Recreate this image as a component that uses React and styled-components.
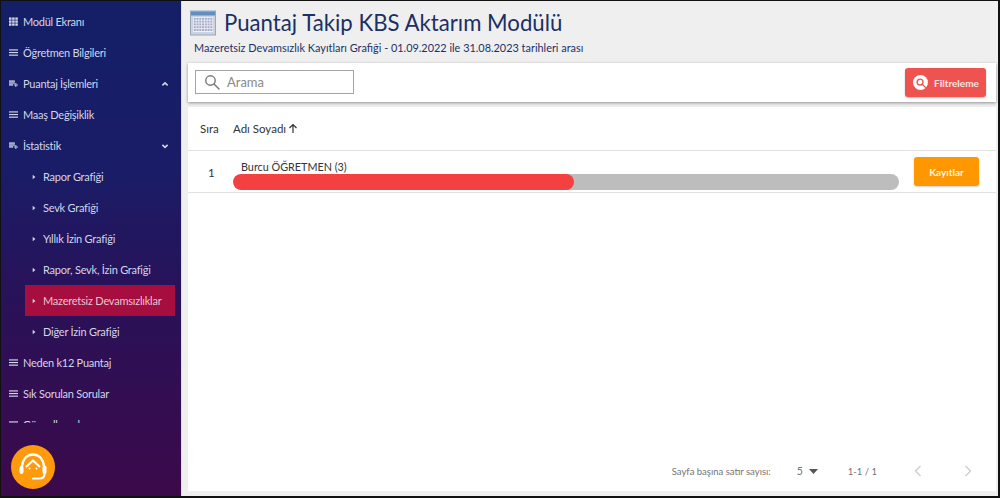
import React from "react";
import styled, { createGlobalStyle } from "styled-components";

const Global = createGlobalStyle`
  html, body { margin: 0; padding: 0; height: 100%; overflow: hidden; background: #000; }
  #root { height: 100%; }
  * { box-sizing: border-box; }
`;
const Frame = styled.div`
  width: 1000px; height: 498px; display: flex; position: relative;
  border: solid #111; border-width: 1px 2px 2px 1px;
  font-family: "Lato", "Open Sans", sans-serif; overflow: hidden;
`;
const Sidebar = styled.aside`
  width: 180px; flex: none; position: relative; display: flex; flex-direction: column;
  background: linear-gradient(180deg, #131f66 0%, #1a1c66 35%, #2a1158 62%, #3c0a4a 100%);
`;
const Menu = styled.nav`
  height: 422px; overflow: hidden; display: flex; flex-direction: column; padding-top: 5px;
`;
const MenuItem = styled.div`
  height: 31px; flex: none; display: flex; align-items: center; padding: 0 9px 0 8px;
  color: #d2d5e8; font-size: 11px; letter-spacing: -0.25px; white-space: nowrap;
  svg { flex: none; margin-right: 5px; }
  span { flex: 1; }
`;
const SubItem = styled.div`
  height: 31px; flex: none; width: 150px; margin-left: 24px; display: flex; align-items: center; padding-left: 7px;
  color: ${p => (p.$active ? "#e6c4d2" : "#d2d5e8")};
  background: ${p => (p.$active ? "#a50e3e" : "transparent")};
  font-size: 11px; letter-spacing: -0.23px; white-space: nowrap;
  svg { flex: none; margin-right: 7px; }
`;
const Fab = styled.div`
  position: absolute; left: 10px; top: 444px; width: 44px; height: 44px; border-radius: 50%;
  background: #ff9a0d; display: flex; align-items: center; justify-content: center;
`;
const Main = styled.main`
  flex: 1; min-width: 0; background: #efefef; display: flex; flex-direction: column;
  padding-left: 6px; padding-right: 2px; border-left: 1px solid #dcdce6;
`;
const Header = styled.header`
  height: 62px; flex: none; margin-left: -6px; padding: 7px 0 0 8px;
`;
const TitleRow = styled.div`
  display: flex; align-items: center; gap: 8px; height: 30px;
`;
const Title = styled.h1`
  margin: 0; font-weight: 400; font-size: 22.2px; line-height: 30px; color: #1c2f66; white-space: nowrap;
`;
const Subtitle = styled.div`
  margin-top: 2px; padding-left: 4px; font-size: 10.9px; line-height: 16px; color: #1c2f66; white-space: nowrap;
`;
const Toolbar = styled.div`
  height: 39px; flex: none; background: #fff; display: flex; align-items: center; justify-content: space-between;
  padding: 0 10px 0 7px; box-shadow: 0 1px 3px rgba(0,0,0,.4);
`;
const Search = styled.div`
  width: 159px; height: 24px; margin-bottom: 2px; border: 1px solid #a4a4a4; display: flex; align-items: center; padding-left: 8px; gap: 7px;
  color: #8a8a8a; font-size: 13px;
`;
const FilterButton = styled.div`
  width: 81px; height: 29px; border-radius: 3px; background: #ef5350; color: #fbe4e4; display: flex; align-items: center;
  padding-left: 8px; gap: 6px; font-size: 10px; font-weight: 700; box-shadow: 0 1px 2px rgba(0,0,0,.25);
`;
const FilterIcon = styled.span`
  width: 15px; height: 15px; border-radius: 50%; background: #fff; display: flex; align-items: center; justify-content: center;
`;
const Card = styled.section`
  flex: 1; min-height: 0; margin-top: 5px; background: #fff; display: flex; flex-direction: column; margin-bottom: 5px;
`;
const HeadRow = styled.div`
  height: 44px; flex: none; display: flex; align-items: center; border-bottom: 1px solid #e2e2e2;
  font-size: 11.5px; color: #333; padding-left: 12px;
`;
const HeadSira = styled.span` width: 33px; `;
const HeadName = styled.span` display: flex; align-items: center; gap: 2px; `;
const Row = styled.div`
  height: 42px; flex: none; display: flex; align-items: center; border-bottom: 1px solid #e2e2e2; padding-left: 20px; padding-right: 17px;
`;
const Index = styled.span` width: 25px; font-size: 11.5px; color: #333; padding-top: 2px; `;
const NameCell = styled.div`
  width: 666px; flex: none; display: flex; flex-direction: column; padding-top: 7px;
`;
const Name = styled.div`
  font-size: 10.8px; line-height: 14px; padding-left: 8px; color: #333; white-space: nowrap;
`;
const Track = styled.div`
  height: 16px; border-radius: 8px; background: #bdbdbd; overflow: hidden;
`;
const Fill = styled.div`
  height: 100%; border-radius: 8px; background: #f34040;
`;
const RecordsButton = styled.div`
  margin-left: auto; width: 65px; height: 29px; border-radius: 3px; background: #ff9800; color: #fff3dc; display: flex; align-items: center; justify-content: center;
  font-size: 10px; font-weight: 700; box-shadow: 0 1px 2px rgba(0,0,0,.2);
`;
const Pagination = styled.footer`
  margin-top: auto; height: 40px; flex: none; display: flex; align-items: center; font-size: 9.5px; color: #757575; padding-right: 24px; justify-content: flex-end;
`;
const PageSize = styled.span`
  display: flex; align-items: center; gap: 6px; margin-left: 26px; margin-right: 30px; font-size: 10.5px;
`;
const PageNav = styled.span`
  display: flex; align-items: center; gap: 42px; margin-left: 37px;
`;

const Grid = () => (
  <svg width="9" height="9" viewBox="0 0 10 10" fill="#d2d5e8">
    {[0, 3.5, 7].flatMap(x => [0.5, 3.8, 7.1].map(y => <rect key={`${x}-${y}`} x={x} y={y} width="2.8" height="2.6" />))}
  </svg>
);
const Bars = () => (
  <svg width="9" height="9" viewBox="0 0 10 10" fill="#d2d5e8">
    <rect y="1.5" width="10" height="1.3" /><rect y="4.4" width="10" height="1.3" /><rect y="7.3" width="10" height="1.3" />
  </svg>
);
const Folder = () => (
  <svg width="9" height="9" viewBox="0 0 10 10" fill="#b9bed8">
    <rect x="0" y="1.5" width="6.5" height="1.7" /><rect x="0" y="3.6" width="6.5" height="1.7" /><rect x="0" y="5.7" width="4.5" height="1.7" />
    <path d="M7 4.5h1.2v1.6H10v1.2H8.2V9H7V7.3H5.3V6.1H7z" />
  </svg>
);
const Caret = () => (
  <svg width="4" height="6" viewBox="0 0 4 7" fill="#d2d5e8"><path d="M0.5 0.8L3.6 3.5L0.5 6.2z" /></svg>
);
const Chevron = ({ up }) => (
  <svg width="8" height="6" viewBox="0 0 10 8" fill="none" stroke="#d2d5e8" strokeWidth="2.2" style={{ marginRight: 3 }}>
    <path d={up ? "M1.5 5.8L5 2.4L8.5 5.8" : "M1.5 2.4L5 5.8L8.5 2.4"} />
  </svg>
);
const CalendarIcon = () => (
  <svg width="26" height="26" viewBox="0 0 26 26" style={{ flex: "none" }}>
    <rect x="0.5" y="1" width="25" height="24" fill="#c9d3e2" stroke="#9aa8bd" />
    <rect x="1" y="1.5" width="24" height="4" fill="#5f8fc0" />
    <rect x="3" y="7" width="20" height="15" fill="#eef0f6" />
    <g fill="#a9acc9">
      {[0, 1, 2, 3, 4].flatMap(r => [0, 1, 2, 3, 4, 5, 6].map(c => (
        <rect key={`${r}-${c}`} x={3.8 + c * 2.75} y={7.8 + r * 2.8} width="2" height="2" />
      )))}
    </g>
  </svg>
);
const SearchGlyph = ({ size, color, w }) => (
  <svg width={size} height={size} viewBox="0 0 16 16" fill="none" stroke={color} strokeWidth={w}>
    <circle cx="6.5" cy="6.5" r="4.7" /><path d="M10 10l5 5" strokeLinecap="round" />
  </svg>
);
const HeadsetIcon = () => (
  <svg width="32" height="30" viewBox="0 0 32 30" fill="none" stroke="#fff">
    <path d="M5 14C6 7 10 2.5 16 2.5S26 7 27 14" strokeWidth="2.4" />
    <path d="M9 15L16 8.5L23 15" strokeWidth="2.2" strokeLinejoin="round" />
    <rect x="2.5" y="13.5" width="4" height="8.5" rx="2" fill="#fff" strokeWidth="0" />
    <rect x="25.5" y="13.5" width="4" height="8.5" rx="2" fill="#fff" strokeWidth="0" />
    <circle cx="12.5" cy="16.5" r="1" fill="#fff" strokeWidth="0" />
    <circle cx="19.5" cy="16.5" r="1" fill="#fff" strokeWidth="0" />
    <path d="M27.5 22c0 3-2 4.5-5 4.5H16" strokeWidth="2.2" strokeLinecap="round" />
  </svg>
);

const subs = ["Rapor Grafiği", "Sevk Grafiği", "Yıllık İzin Grafiği", "Rapor, Sevk, İzin Grafiği", "Mazeretsiz Devamsızlıklar", "Diğer İzin Grafiği"];

export default function App() {
  return (
    <>
      <Global />
      <Frame>
        <Sidebar>
          <Menu>
            <MenuItem><Grid /><span>Modül Ekranı</span></MenuItem>
            <MenuItem><Bars /><span>Öğretmen Bilgileri</span></MenuItem>
            <MenuItem><Folder /><span>Puantaj İşlemleri</span><Chevron up /></MenuItem>
            <MenuItem><Bars /><span>Maaş Değişiklik</span></MenuItem>
            <MenuItem><Folder /><span>İstatistik</span><Chevron /></MenuItem>
            {subs.map(s => (
              <SubItem key={s} $active={s === "Mazeretsiz Devamsızlıklar"}><Caret />{s}</SubItem>
            ))}
            <MenuItem><Bars /><span>Neden k12 Puantaj</span></MenuItem>
            <MenuItem><Bars /><span>Sık Sorulan Sorular</span></MenuItem>
            <MenuItem><Bars /><span>Güncellemeler</span></MenuItem>
          </Menu>
          <Fab><HeadsetIcon /></Fab>
        </Sidebar>
        <Main>
          <Header>
            <TitleRow><CalendarIcon /><Title>Puantaj Takip KBS Aktarım Modülü</Title></TitleRow>
            <Subtitle>Mazeretsiz Devamsızlık Kayıtları Grafiği - 01.09.2022 ile 31.08.2023 tarihleri arası</Subtitle>
          </Header>
          <Toolbar>
            <Search><SearchGlyph size={16} color="#777" w={1.4} />Arama</Search>
            <FilterButton><FilterIcon><SearchGlyph size={10} color="#ef5350" w={2.2} /></FilterIcon>Filtreleme</FilterButton>
          </Toolbar>
          <Card>
            <HeadRow>
              <HeadSira>Sıra</HeadSira>
              <HeadName>Adı Soyadı
                <svg width="10" height="11" viewBox="0 0 10 11" fill="none" stroke="#333" strokeWidth="1.2"><path d="M5 10V1.5M1.5 5L5 1.5L8.5 5" /></svg>
              </HeadName>
            </HeadRow>
            <Row>
              <Index>1</Index>
              <NameCell>
                <Name>Burcu ÖĞRETMEN (3)</Name>
                <Track><Fill style={{ width: `${(341 / 666) * 100}%` }} /></Track>
              </NameCell>
              <RecordsButton>Kayıtlar</RecordsButton>
            </Row>
            <Pagination>
              Sayfa başına satır sayısı:
              <PageSize>5 <svg width="9" height="5" viewBox="0 0 9 5" fill="#555"><path d="M0 0h9L4.5 5z" /></svg></PageSize>
              1-1 / 1
              <PageNav>
                <svg width="8" height="12" viewBox="0 0 8 12" fill="none" stroke="#d0d0d0" strokeWidth="1.5"><path d="M6.5 1L1.5 6l5 5" /></svg>
                <svg width="8" height="12" viewBox="0 0 8 12" fill="none" stroke="#d0d0d0" strokeWidth="1.5"><path d="M1.5 1l5 5-5 5" /></svg>
              </PageNav>
            </Pagination>
          </Card>
        </Main>
      </Frame>
    </>
  );
}
